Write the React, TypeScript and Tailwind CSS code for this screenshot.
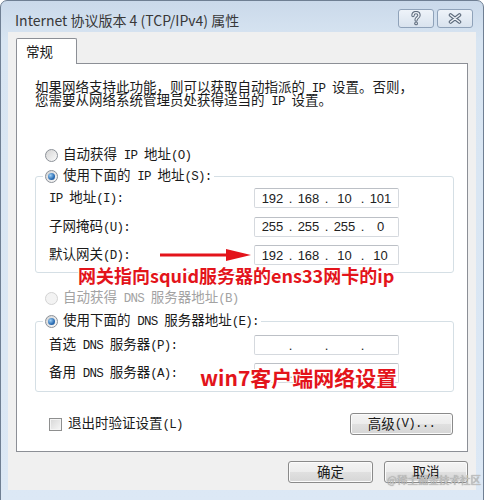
import { Fragment, type ReactNode } from 'react';

const ui = "font-['Noto_Sans_CJK_SC',sans-serif]";

// SimSun look: half-width runs in a mono face at half the CJK width
function T({ s }: { s: string }) {
  const parts = s.split(/([\x20-\x7e]+)/).filter(Boolean);
  return (
    <>
      {parts.map((p, i) =>
        /^[\x20-\x7e]+$/.test(p) ? (
          <span
            key={i}
            className="whitespace-pre font-['Liberation_Mono',monospace] text-[12.5px] leading-none tracking-[-0.75px]"
          >
            {p}
          </span>
        ) : (
          <Fragment key={i}>{p}</Fragment>
        ),
      )}
    </>
  );
}

function Radio({ checked, disabled }: { checked?: boolean; disabled?: boolean }) {
  return (
    <span
      className={`flex h-[13px] w-[13px] shrink-0 items-center justify-center rounded-full border ${
        disabled
          ? 'border-[#d3d3d3] bg-[#f3f3f3]'
          : 'border-[#8c9198] bg-[linear-gradient(135deg,#d4d4d4,#fbfbfb)]'
      }`}
    >
      {checked && (
        <span className="h-[7px] w-[7px] rounded-full bg-[radial-gradient(circle_at_35%_35%,#9fd0f5,#2a6cb3_60%,#1b4f8c)]" />
      )}
    </span>
  );
}

function IpBox({ parts }: { parts: string[] }) {
  return (
    <div className="flex h-[20px] w-[145px] items-center rounded-[2px] border border-[#d5d9de] border-t-[#bcc0c6] bg-white pl-[2px] font-['Liberation_Sans',sans-serif] text-[13px] leading-none text-[#222]">
      {parts.map((p, i) => (
        <Fragment key={i}>
          <span className="w-[31px] text-center">{p}</span>
          {i < 3 && <span className="w-[5px] text-center">.</span>}
        </Fragment>
      ))}
    </div>
  );
}

function Row({ label, parts }: { label: string; parts: string[] }) {
  return (
    <div className="flex h-[20px] items-center">
      <span className="w-[205px] whitespace-nowrap leading-none">
        <T s={label} />
      </span>
      <IpBox parts={parts} />
    </div>
  );
}

function Btn({ children, className = '' }: { children: ReactNode; className?: string }) {
  return (
    <div
      className={`flex h-[22px] items-center justify-center rounded-[3px] border border-[#8a8a8a] bg-[linear-gradient(#f4f4f4_0%,#ececec_50%,#e0e0e0_51%,#d6d6d6_100%)] shadow-[inset_0_0_0_1px_#fbfbfb] text-[13.5px] leading-none text-[#1a1a1a] ${className}`}
    >
      {children}
    </div>
  );
}

export default function App() {
  const empty = ['', '', '', ''];
  return (
    <div className={`relative h-[500px] w-[493px] overflow-hidden bg-white ${ui}`}>
      {/* window frame */}
      <div className="flex h-[506px] w-[484px] flex-col rounded-t-[7px] border border-[#6f7f93] bg-[linear-gradient(#cad9ea,#d8e5f2_40px,#dce8f5)] px-[7px]">
        {/* title bar */}
        <div className="-mx-[7px] flex h-[31px] items-start pl-[14px] pr-[10px]">
          <span className="mt-[10px] flex-1 whitespace-nowrap text-[14px] leading-[18px] text-[#383838]">
            Internet 协议版本 4 (TCP/IPv4) 属性
          </span>
          <div className="mt-[8px] flex gap-[3px]">
            <div className="flex h-[19px] w-[36px] items-center justify-center rounded-[3px] border border-[#8fa2b9] bg-[linear-gradient(#eef3f9,#d9e3ee)]">
              <svg width="12" height="15" viewBox="0 0 12 15">
                <path
                  d="M3 4.6C3 2.6 4.4 1.6 6 1.6c1.8 0 3 1.1 3 2.7 0 1.5-1 2.1-2 2.8-.6.4-.9.9-.9 1.9"
                  fill="none"
                  stroke="#5f6d7e"
                  strokeWidth="3.4"
                  strokeLinecap="round"
                />
                <path
                  d="M3 4.6C3 2.6 4.4 1.6 6 1.6c1.8 0 3 1.1 3 2.7 0 1.5-1 2.1-2 2.8-.6.4-.9.9-.9 1.9"
                  fill="none"
                  stroke="#eef2f7"
                  strokeWidth="1.3"
                  strokeLinecap="round"
                />
                <circle cx="6.1" cy="12.4" r="1.9" fill="#5f6d7e" />
                <circle cx="6.1" cy="12.4" r="0.8" fill="#eef2f7" />
              </svg>
            </div>
            <div className="flex h-[19px] w-[36px] items-center justify-center rounded-[3px] border border-[#8fa2b9] bg-[linear-gradient(#eef3f9,#d9e3ee)]">
              <svg width="14" height="11" viewBox="0 0 14 11">
                <path d="M2.5 2l9 7M11.5 2l-9 7" stroke="#5f6d7e" strokeWidth="3.6" strokeLinecap="round" />
                <path d="M2.5 2l9 7M11.5 2l-9 7" stroke="#eef2f7" strokeWidth="1.4" strokeLinecap="round" />
              </svg>
            </div>
          </div>
        </div>

        {/* client area */}
        <div className="flex h-[458px] flex-col bg-[#f0f0f0] pl-[8px] pr-[8px] text-[13.5px] text-[#1a1a1a]">
          {/* tab */}
          <div className="relative z-10 mt-[6px] -mb-px flex h-[26px] w-[61px] items-start rounded-t-[2px] border border-b-0 border-[#8c8f96] bg-white pl-[9px] pt-[4px] leading-[16px]">
            常规
          </div>

          {/* tab panel */}
          <div className="flex flex-col border border-[#8c8f96] bg-white pt-[16px] pb-[16px]">
            <div className="ml-[18px] flex flex-col whitespace-nowrap leading-[13px]">
              <span className="block h-[13px]">
                <T s="如果网络支持此功能，则可以获取自动指派的 IP 设置。否则，" />
              </span>
              <span className="block h-[13px]">
                <T s="您需要从网络系统管理员处获得适当的 IP 设置。" />
              </span>
            </div>

            <div className="ml-[28px] mt-[41px] flex h-[16px] items-center gap-[5px] leading-none">
              <Radio />
              <span>
                <T s="自动获得 IP 地址(O)" />
              </span>
            </div>

            <fieldset className="ml-[18px] mr-[13px] mt-[5px] rounded-[3px] border border-[#d5dfe5] px-[7px] pb-[7px]">
              <legend className="bg-white px-[2px]">
                <span className="flex h-[16px] items-center gap-[5px] leading-none">
                  <Radio checked />
                  <span>
                    <T s="使用下面的 IP 地址(S):" />
                  </span>
                </span>
              </legend>
              <div className="flex flex-col gap-[8.5px] pl-[6px] pt-[4px]">
                <Row label="IP 地址(I):" parts={['192', '168', '10', '101']} />
                <Row label="子网掩码(U):" parts={['255', '255', '255', '0']} />
                <Row label="默认网关(D):" parts={['192', '168', '10', '10']} />
              </div>
            </fieldset>

            <div className="ml-[28px] mt-[17px] flex h-[16px] items-center gap-[5px] leading-none text-[#a3a3a3]">
              <Radio disabled />
              <span>
                <T s="自动获得 DNS 服务器地址(B)" />
              </span>
            </div>

            <fieldset className="ml-[18px] mr-[13px] mt-[7px] rounded-[3px] border border-[#d5dfe5] px-[7px] pb-[8px]">
              <legend className="bg-white px-[2px]">
                <span className="flex h-[16px] items-center gap-[5px] leading-none">
                  <Radio checked />
                  <span>
                    <T s="使用下面的 DNS 服务器地址(E):" />
                  </span>
                </span>
              </legend>
              <div className="flex flex-col gap-[8px] pl-[6px] pt-[6px]">
                <Row label="首选 DNS 服务器(P):" parts={empty} />
                <Row label="备用 DNS 服务器(A):" parts={empty} />
              </div>
            </fieldset>

            <div className="ml-[32px] mr-[14px] mt-[21px] flex h-[22px] items-center justify-between">
              <div className="flex items-center gap-[6px] leading-none">
                <span className="h-[13px] w-[13px] border border-[#8e8f8f] bg-[linear-gradient(135deg,#d6d6d6,#f7f7f7)] shadow-[inset_0_0_0_1px_#f4f4f4]" />
                <span>
                  <T s="退出时验证设置(L)" />
                </span>
              </div>
              <Btn className="w-[103px]">
                <T s="高级(V)..." />
              </Btn>
            </div>
          </div>

          <div className="mt-[9px] flex justify-end gap-[11px]">
            <Btn className="w-[85px]">确定</Btn>
            <Btn className="w-[84px]">取消</Btn>
          </div>
        </div>
      </div>

      {/* annotations on top of the screenshot */}
      <svg className="absolute left-[158px] top-[247px]" width="95" height="16" viewBox="0 0 95 16">
        <path d="M2 8H72" stroke="#e3141b" strokeWidth="3" />
        <path d="M68 2L93 8L68 14Z" fill="#e3141b" />
      </svg>
      <div className="absolute left-[78px] top-[265px] whitespace-nowrap text-[18px] font-bold leading-[20px] text-[#e3141b] [text-shadow:1px_1px_0_#fff,-1px_-1px_0_#fff,1px_-1px_0_#fff,-1px_1px_0_#fff]">
        网关指向squid服务器的ens33网卡的ip
      </div>
      <div className="absolute left-[200px] top-[365px] whitespace-nowrap text-[21px] font-bold leading-[24px] text-[#e3141b] [text-shadow:1px_1px_0_#fff,-1px_-1px_0_#fff,1px_-1px_0_#fff,-1px_1px_0_#fff]">
        win7客户端网络设置
      </div>
      <div className="absolute left-[387px] top-[473px] whitespace-nowrap text-[10.5px] leading-[14px] text-[#c4c4c4] [text-shadow:0_0_1px_#7a7a7a]">
        @稀土掘金技术社区
      </div>
    </div>
  );
}
